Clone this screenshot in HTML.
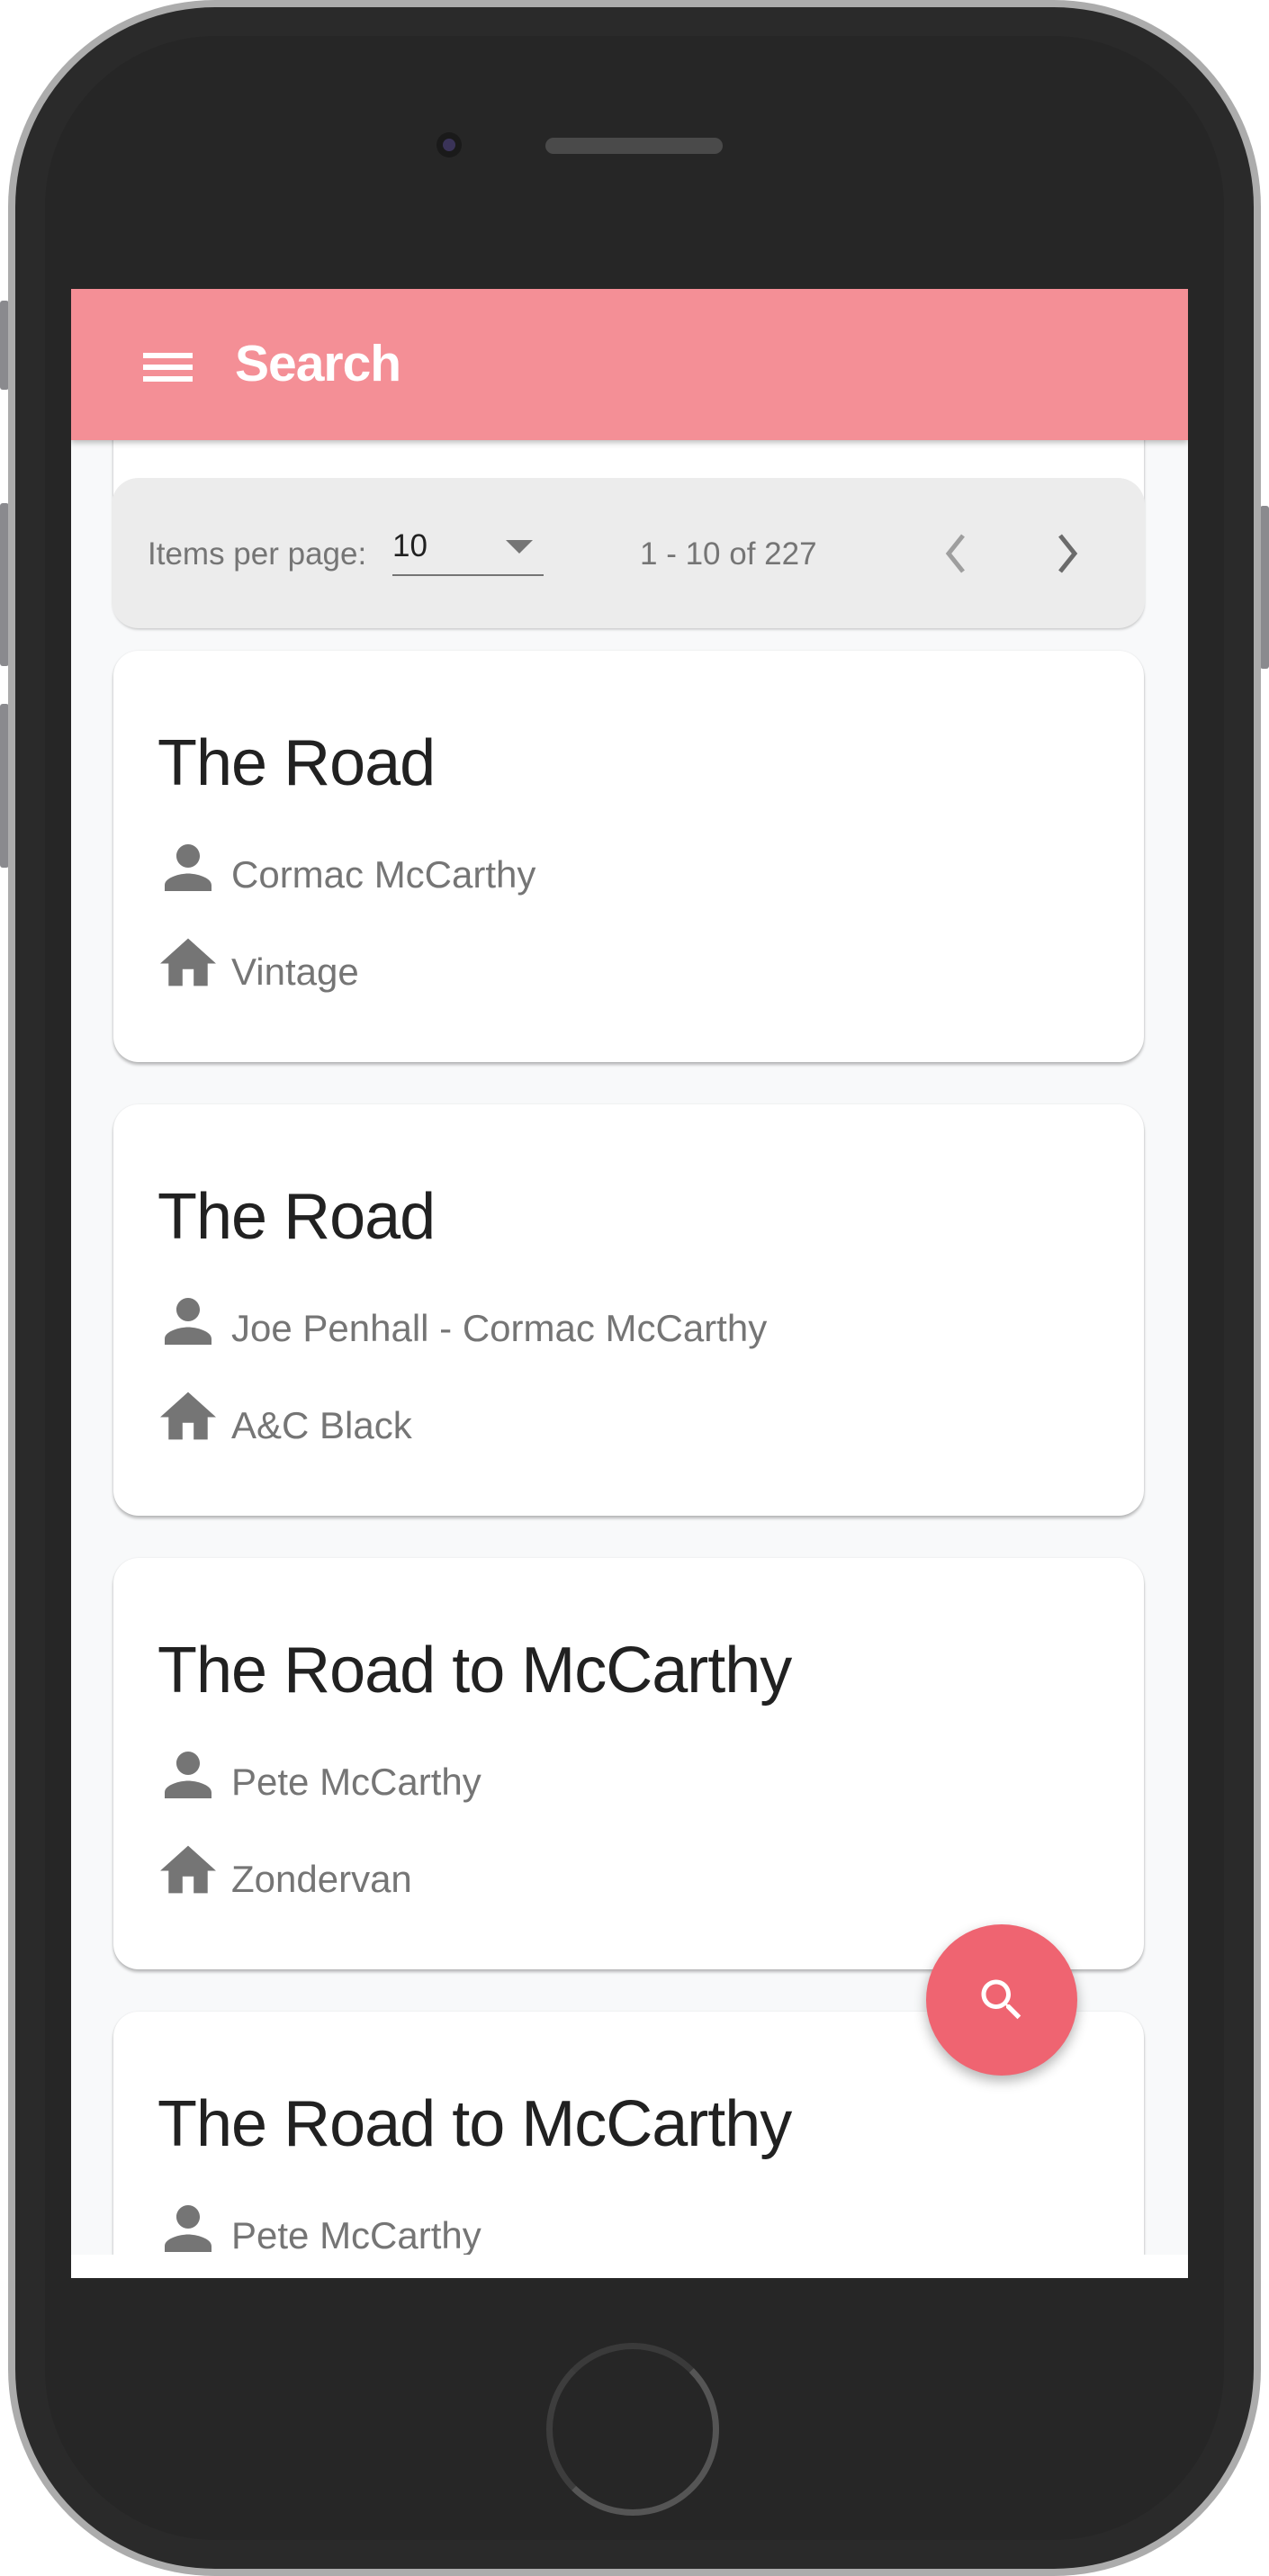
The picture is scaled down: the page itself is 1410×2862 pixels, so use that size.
<!DOCTYPE html>
<html><head><meta charset="utf-8"><style>
*{margin:0;padding:0;box-sizing:border-box}
body{width:1410px;height:2862px;background:#fff;position:relative;overflow:hidden;font-family:"Liberation Sans",sans-serif}
.abs{position:absolute}
.phone{left:9px;top:0;width:1392px;height:2862px;border-radius:230px;background:#acacac}
.body{left:17px;top:8px;width:1376px;height:2846px;border-radius:222px;background:#2a2a2a}
.body2{left:50px;top:40px;width:1310px;height:2782px;border-radius:190px;background:#262626}
.btn{background:#8a8a8e;border-radius:3px}
.screen{left:79px;top:321px;width:1241px;height:2210px;background:#f8f9fa;overflow:hidden}
.header{left:0;top:0;width:1241px;height:168px;background:#f48f96;box-shadow:0 3px 6px rgba(0,0,0,.25);z-index:5}
.card{left:47px;width:1145px;height:457px;background:#fff;border-radius:28px;box-shadow:0 3px 3px rgba(0,0,0,.25),0 0 2px rgba(0,0,0,.08)}
.title{position:absolute;left:49px;font-size:72px;color:#212121;letter-spacing:-1px}
.row{position:absolute;left:131px;font-size:42px;color:#757575}
.ic{position:absolute;left:56px}
</style></head><body>
<div class="abs btn" style="left:0;top:334px;width:10px;height:99px"></div>
<div class="abs btn" style="left:0;top:559px;width:10px;height:181px"></div>
<div class="abs btn" style="left:0;top:782px;width:10px;height:182px"></div>
<div class="abs btn" style="left:1400px;top:562px;width:10px;height:181px"></div>
<div class="abs phone"></div>
<div class="abs body"></div>
<div class="abs body2"></div>
<div class="abs" style="left:485px;top:147px;width:28px;height:28px;border-radius:50%;background:#1a1a1a"></div>
<div class="abs" style="left:492px;top:154px;width:14px;height:14px;border-radius:50%;background:#3a3358"></div>
<div class="abs" style="left:606px;top:153px;width:197px;height:18px;border-radius:9px;background:#4a4a4a"></div>
<div class="abs" style="left:607px;top:2603px;width:192px;height:192px;border-radius:50%;border:7px solid #555;border-top-color:#3a3a3a;border-left-color:#3d3d3d"></div>
<div class="abs screen">
  <div class="abs header">
    <div class="abs" style="left:80px;top:71px;width:55px;height:6px;background:#fff"></div>
    <div class="abs" style="left:80px;top:84px;width:55px;height:6px;background:#fff"></div>
    <div class="abs" style="left:80px;top:97px;width:55px;height:6px;background:#fff"></div>
    <div class="abs" style="left:182px;top:50px;font-size:57px;color:#fff;font-weight:bold;letter-spacing:-1px">Search</div>
  </div>
  <div class="abs card" style="top:-200px;height:575px"></div>
  <div class="abs" style="left:45px;top:210px;width:1148px;height:167px;background:#ececec;border-radius:30px">
    <div class="abs" style="left:40px;top:65px;font-size:35px;color:#757575">Items per page:</div>
    <div class="abs" style="left:312px;top:56px;font-size:35px;color:#212121">10</div>
    <div class="abs" style="left:312px;top:107px;width:168px;height:2px;background:#757575"></div>
    <div class="abs" style="left:438px;top:69px;width:0;height:0;border-left:15px solid transparent;border-right:15px solid transparent;border-top:15px solid #757575"></div>
    <div class="abs" style="left:587px;top:65px;font-size:35px;color:#757575">1 - 10 of 227</div>
    <svg class="abs" style="left:922px;top:62px" width="30" height="44"><path d="M24 2 L8 22 L24 42" stroke="#9e9e9e" stroke-width="5" fill="none"/></svg>
    <svg class="abs" style="left:1048px;top:62px" width="30" height="44"><path d="M6 2 L22 22 L6 42" stroke="#6b6b6b" stroke-width="5" fill="none"/></svg>
  </div>

  <div class="abs card" style="top:402px">
    <div class="title" style="top:84px">The Road</div>
    <svg class="ic" style="top:215px" width="54" height="52" viewBox="4 4 16 16"><path fill="#757575" d="M12 12c2.2 0 4-1.8 4-4s-1.8-4-4-4-4 1.8-4 4 1.8 4 4 4zm0 2c-2.7 0-8 1.3-8 4v2h16v-2c0-2.7-5.3-4-8-4z"/></svg>
    <div class="row" style="top:225px">Cormac McCarthy</div>
    <svg class="ic" style="top:316px;left:52px" width="62" height="60" viewBox="2 2 20 19"><path fill="#757575" d="M10 20v-6h4v6h5v-8h3L12 3 2 12h3v8z"/></svg>
    <div class="row" style="top:333px">Vintage</div>
  </div>
  <div class="abs card" style="top:906px">
    <div class="title" style="top:84px">The Road</div>
    <svg class="ic" style="top:215px" width="54" height="52" viewBox="4 4 16 16"><path fill="#757575" d="M12 12c2.2 0 4-1.8 4-4s-1.8-4-4-4-4 1.8-4 4 1.8 4 4 4zm0 2c-2.7 0-8 1.3-8 4v2h16v-2c0-2.7-5.3-4-8-4z"/></svg>
    <div class="row" style="top:225px">Joe Penhall - Cormac McCarthy</div>
    <svg class="ic" style="top:316px;left:52px" width="62" height="60" viewBox="2 2 20 19"><path fill="#757575" d="M10 20v-6h4v6h5v-8h3L12 3 2 12h3v8z"/></svg>
    <div class="row" style="top:333px">A&amp;C Black</div>
  </div>
  <div class="abs card" style="top:1410px">
    <div class="title" style="top:84px">The Road to McCarthy</div>
    <svg class="ic" style="top:215px" width="54" height="52" viewBox="4 4 16 16"><path fill="#757575" d="M12 12c2.2 0 4-1.8 4-4s-1.8-4-4-4-4 1.8-4 4 1.8 4 4 4zm0 2c-2.7 0-8 1.3-8 4v2h16v-2c0-2.7-5.3-4-8-4z"/></svg>
    <div class="row" style="top:225px">Pete McCarthy</div>
    <svg class="ic" style="top:316px;left:52px" width="62" height="60" viewBox="2 2 20 19"><path fill="#757575" d="M10 20v-6h4v6h5v-8h3L12 3 2 12h3v8z"/></svg>
    <div class="row" style="top:333px">Zondervan</div>
  </div>
  <div class="abs card" style="top:1914px;height:270px;border-bottom-left-radius:0;border-bottom-right-radius:0">
    <div class="title" style="top:84px">The Road to McCarthy</div>
    <svg class="ic" style="top:215px" width="54" height="52" viewBox="4 4 16 16"><path fill="#757575" d="M12 12c2.2 0 4-1.8 4-4s-1.8-4-4-4-4 1.8-4 4 1.8 4 4 4zm0 2c-2.7 0-8 1.3-8 4v2h16v-2c0-2.7-5.3-4-8-4z"/></svg>
    <div class="row" style="top:225px">Pete McCarthy</div>
  </div>
  <div class="abs" style="left:0;top:2184px;width:1241px;height:26px;background:#fff"></div>
  <div class="abs" style="left:950px;top:1817px;width:168px;height:168px;border-radius:50%;background:#ef6471;box-shadow:0 6px 14px rgba(0,0,0,.3)">
    <svg class="abs" style="left:54px;top:54px" width="60" height="60" viewBox="0 0 24 24"><path fill="#fff" d="M15.5 14h-.8l-.3-.3c1-1.1 1.6-2.6 1.6-4.2C16 5.9 13.1 3 9.5 3S3 5.900 3 9.5 5.9 16 9.5 16c1.6 0 3.1-.6 4.2-1.6l.3.3v.8l5 5 1.5-1.5-5-5zm-6 0C7 14 5 12 5 9.5S7 5 9.5 5 14 7 14 9.5 12 14 9.5 14z"/></svg>
  </div>
</div>
</body></html>
